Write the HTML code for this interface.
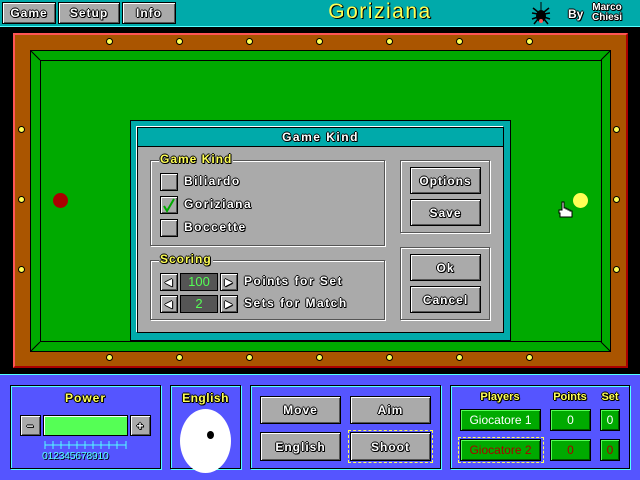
<!DOCTYPE html>
<html><head><meta charset="utf-8"><style>
*{margin:0;padding:0;box-sizing:border-box}
body{width:640px;height:480px;background:#000;position:relative;overflow:hidden;font-family:"Liberation Sans",sans-serif;font-weight:bold;font-size:12px}
.a{position:absolute}
.btn{position:absolute;background:#aaa;border:1px solid #000;box-shadow:inset 1px 1px 0 #fff,inset -1px -1px 0 #555;color:#fff;text-shadow:1px 0 #000,-1px 0 #000,0 1px #000,0 -1px #000,1px 1px #000;display:flex;align-items:center;justify-content:center;letter-spacing:1px}
.lbl{position:absolute;color:#fff;text-shadow:1px 0 #000,-1px 0 #000,0 1px #000,0 -1px #000,1px 1px #000;letter-spacing:1.5px}
.ylw{position:absolute;color:#ff5;text-shadow:1px 0 #000,-1px 0 #000,0 1px #000,0 -1px #000,1px 1px #000;letter-spacing:1px}
.grp{position:absolute;border:1px solid #555;box-shadow:1px 1px 0 #fff,inset 1px 1px 0 #fff}
.chk{position:absolute;width:18px;height:18px;background:#aaa;border:1px solid #000;box-shadow:inset 1px 1px 0 #fff,inset -1px -1px 0 #555}
.d{position:absolute;width:7px;height:7px;border-radius:50%;background:#ff5;border:1px solid #000}
.pan{position:absolute;border:1px solid #000;box-shadow:inset 1px 1px 0 #5ff,1px 1px 0 #5ff}
.gbox{position:absolute;background:#00aa00;border:1px solid #000;box-shadow:inset 1px 1px 0 #5f5,inset -1px -1px 0 #005500;color:#fff;font-weight:normal;display:flex;align-items:center;justify-content:center;font-size:12px}
</style></head><body>
<div class="a" style="left:0;top:0;width:640px;height:27px;background:#00aaaa;border-bottom:1px solid #5ff"></div>
<div class="btn" style="left:2px;top:2px;width:54px;height:22px">Game</div>
<div class="btn" style="left:58px;top:2px;width:62px;height:22px">Setup</div>
<div class="btn" style="left:122px;top:2px;width:54px;height:22px">Info</div>
<div class="a" style="left:318px;top:0px;width:124px;text-align:center;color:#ff5;font-size:21px;font-weight:normal;text-shadow:1px 1px #000,1px 0 #000;letter-spacing:1.5px">Goriziana</div>
<svg class="a" style="left:530px;top:2px" width="22" height="24" viewBox="0 0 22 24"><line x1="11" y1="0" x2="11" y2="8" stroke="#000"/><g stroke="#000" stroke-width="1.5" fill="none"><path d="M8 10 L3 6 M8 12 L2 11 M8 15 L2 17 M8 17 L4 22 M14 10 L19 6 M14 12 L20 11 M14 15 L20 17 M14 17 L18 22"/></g><ellipse cx="11" cy="14" rx="5" ry="6" fill="#000"/><circle cx="11" cy="19" r="2" fill="#f55"/></svg>
<div class="lbl" style="left:568px;top:7px;font-size:12px;letter-spacing:0">By</div>
<div class="lbl" style="left:592px;top:3px;font-size:10px;line-height:10px;text-align:center;letter-spacing:0">Marco<br>Chiesi</div>
<div class="a" style="left:13px;top:33px;width:615px;height:335px;background:#aa5500;border-top:2px solid #f55;border-left:2px solid #f55;border-right:2px solid #a00;border-bottom:2px solid #a00"></div>
<div class="a" style="left:30px;top:50px;width:581px;height:302px;background:#00aa00;border:1px solid #000"></div>
<div class="a" style="left:40px;top:60px;width:562px;height:282px;border:1px solid #000"></div>
<svg class="a" style="left:30px;top:50px" width="581" height="302"><g stroke="#000"><line x1="0" y1="0" x2="10" y2="10"/><line x1="581" y1="0" x2="571" y2="10"/><line x1="0" y1="302" x2="10" y2="292"/><line x1="581" y1="302" x2="571" y2="292"/></g></svg>
<div class="d" style="left:106px;top:38px"></div><div class="d" style="left:176px;top:38px"></div><div class="d" style="left:246px;top:38px"></div><div class="d" style="left:316px;top:38px"></div><div class="d" style="left:386px;top:38px"></div><div class="d" style="left:456px;top:38px"></div><div class="d" style="left:526px;top:38px"></div>
<div class="d" style="left:106px;top:354px"></div><div class="d" style="left:176px;top:354px"></div><div class="d" style="left:246px;top:354px"></div><div class="d" style="left:316px;top:354px"></div><div class="d" style="left:386px;top:354px"></div><div class="d" style="left:456px;top:354px"></div><div class="d" style="left:526px;top:354px"></div>
<div class="d" style="left:18px;top:126px"></div><div class="d" style="left:18px;top:196px"></div><div class="d" style="left:18px;top:266px"></div>
<div class="d" style="left:613px;top:126px"></div><div class="d" style="left:613px;top:196px"></div><div class="d" style="left:613px;top:266px"></div>
<div class="a" style="left:53px;top:193px;width:15px;height:15px;border-radius:50%;background:#a00"></div>
<div class="a" style="left:573px;top:193px;width:15px;height:15px;border-radius:50%;background:#ff5"></div>
<svg class="a" style="left:558px;top:201px" width="18" height="17"><path d="M4 1 h2 v6 h2 v1 h2 v1 h2 v1 h2 v6 h-12 v-4 h-1 v-3 h3 z" fill="#fff" stroke="#000"/></svg>
<div class="a" style="left:130px;top:120px;width:381px;height:221px;background:#00aaaa;border:1px solid #000"></div>
<div class="a" style="left:137px;top:127px;width:367px;height:206px;background:#aaa;border:1px solid #000;box-shadow:-1px -1px 0 #fff"></div>
<div class="a" style="left:138px;top:128px;width:365px;height:19px;background:#00aaaa;border-bottom:1px solid #000"></div>
<div class="lbl" style="left:138px;top:130px;width:365px;text-align:center">Game Kind</div>
<div class="grp" style="left:150px;top:160px;width:235px;height:86px"></div>
<div class="ylw" style="left:159px;top:152px;background:#aaa;padding:0 1px">Game Kind</div>
<div class="chk" style="left:160px;top:173px"></div>
<div class="chk" style="left:160px;top:196px"></div>
<svg class="a" style="left:162px;top:197px" width="14" height="16"><path d="M2 9 L5 14 L12 2" stroke="#0a0" stroke-width="2" fill="none"/></svg>
<div class="chk" style="left:160px;top:219px"></div>
<div class="lbl" style="left:184px;top:174px">Biliardo</div>
<div class="lbl" style="left:184px;top:197px">Goriziana</div>
<div class="lbl" style="left:184px;top:220px">Boccette</div>
<div class="grp" style="left:150px;top:260px;width:235px;height:60px"></div>
<div class="ylw" style="left:159px;top:252px;background:#aaa;padding:0 1px">Scoring</div>
<div class="btn" style="left:160px;top:273px;width:18px;height:18px;font-size:9px">◀</div>
<div class="a" style="left:180px;top:273px;width:38px;height:18px;background:#555;border:1px solid #000;color:#5f5;font-weight:normal;text-align:center;font-size:13px;line-height:16px">100</div>
<div class="btn" style="left:220px;top:273px;width:18px;height:18px;font-size:9px">▶</div>
<div class="btn" style="left:160px;top:295px;width:18px;height:18px;font-size:9px">◀</div>
<div class="a" style="left:180px;top:295px;width:38px;height:18px;background:#555;border:1px solid #000;color:#5f5;font-weight:normal;text-align:center;font-size:13px;line-height:16px">2</div>
<div class="btn" style="left:220px;top:295px;width:18px;height:18px;font-size:9px">▶</div>
<div class="lbl" style="left:244px;top:274px">Points for Set</div>
<div class="lbl" style="left:244px;top:296px">Sets for Match</div>
<div class="grp" style="left:400px;top:160px;width:90px;height:73px"></div>
<div class="btn" style="left:410px;top:167px;width:71px;height:27px">Options</div>
<div class="btn" style="left:410px;top:199px;width:71px;height:27px">Save</div>
<div class="grp" style="left:400px;top:247px;width:90px;height:73px"></div>
<div class="btn" style="left:410px;top:254px;width:71px;height:27px">Ok</div>
<div class="btn" style="left:410px;top:286px;width:71px;height:27px">Cancel</div>
<div class="a" style="left:0;top:374px;width:640px;height:106px;background:#5555ff;border-top:1px solid #5ff"></div>
<div class="pan" style="left:10px;top:385px;width:151px;height:84px"></div>
<div class="pan" style="left:170px;top:385px;width:71px;height:84px"></div>
<div class="pan" style="left:250px;top:385px;width:191px;height:84px"></div>
<div class="pan" style="left:450px;top:385px;width:180px;height:84px"></div>
<div class="ylw" style="left:10px;top:391px;width:151px;text-align:center">Power</div>
<div class="btn" style="left:20px;top:415px;width:21px;height:21px">−</div>
<div class="a" style="left:43px;top:415px;width:85px;height:21px;background:#5f5;border:1px solid #000;box-shadow:inset 1px 1px 0 #fff"></div>
<div class="btn" style="left:130px;top:415px;width:21px;height:21px">+</div>
<svg class="a" style="left:44px;top:440px" width="84" height="10"><g stroke="#5ff"><line x1="1" y1="5" x2="82" y2="5"/><path d="M1 1v8M9 1v8M17 1v8M25 1v8M33 1v8M41 1v8M49 1v8M57 1v8M65 1v8M73 1v8M82 1v8"/></g></svg>
<div class="a" style="left:42px;top:450px;font-size:10.5px;color:#5ff;font-weight:normal;letter-spacing:-0.3px;text-shadow:1px 1px #000">012345678910</div>
<div class="ylw" style="left:170px;top:391px;width:71px;text-align:center;letter-spacing:0.5px">English</div>
<div class="a" style="left:180px;top:409px;width:51px;height:64px;border-radius:50%;background:#fff"></div>
<div class="a" style="left:207px;top:431px;width:7px;height:8px;border-radius:50%;background:#000"></div>
<div class="btn" style="left:260px;top:396px;width:81px;height:28px">Move</div>
<div class="btn" style="left:350px;top:396px;width:81px;height:28px">Aim</div>
<div class="btn" style="left:260px;top:432px;width:81px;height:29px">English</div>
<div class="a" style="left:348px;top:430px;width:85px;height:33px;border:1px dashed #ff5"></div>
<div class="btn" style="left:350px;top:432px;width:81px;height:29px">Shoot</div>
<div class="ylw" style="left:470px;top:391px;width:60px;text-align:center;letter-spacing:0;font-size:11px">Players</div>
<div class="ylw" style="left:545px;top:391px;width:50px;text-align:center;letter-spacing:0;font-size:11px">Points</div>
<div class="ylw" style="left:598px;top:391px;width:24px;text-align:center;letter-spacing:0;font-size:11px">Set</div>
<div class="gbox" style="left:460px;top:409px;width:81px;height:22px">Giocatore 1</div>
<div class="gbox" style="left:550px;top:409px;width:41px;height:22px">0</div>
<div class="gbox" style="left:600px;top:409px;width:20px;height:22px">0</div>
<div class="a" style="left:458px;top:437px;width:86px;height:26px;border:1px dashed #ff5"></div>
<div class="gbox" style="left:460px;top:439px;width:81px;height:22px;color:#a00">Giocatore 2</div>
<div class="gbox" style="left:550px;top:439px;width:41px;height:22px;color:#a00">0</div>
<div class="gbox" style="left:600px;top:439px;width:20px;height:22px;color:#a00">0</div>
</body></html>
